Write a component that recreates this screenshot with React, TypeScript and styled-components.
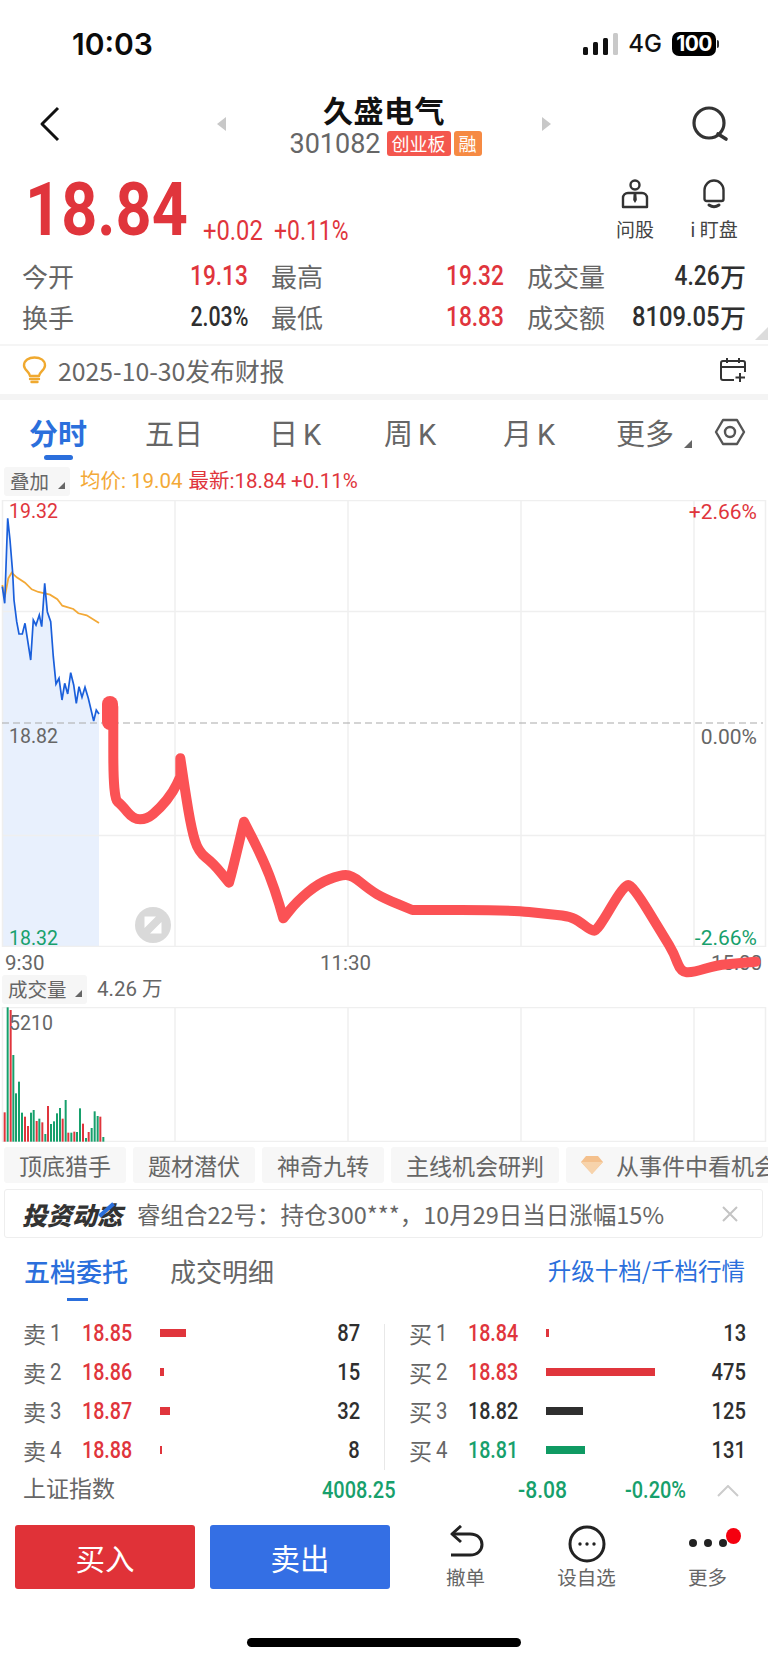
import React from "react";
import styled, { createGlobalStyle } from "styled-components";

const CJK = `"Noto Sans CJK SC", "Liberation Sans", sans-serif`;
const DIGITS = `Roboto, "Noto Sans CJK SC", sans-serif`;
const RED = "#e0353c";
const GREEN = "#17a06c";
const BLUE = "#2b6fdc";
const GREY = "#666666";
const DARK = "#2f2f2f";

const Global = createGlobalStyle`
  html, body { margin: 0; padding: 0; background: #fff; }
  body { width: 768px; height: 1662px; overflow: hidden; font-family: ${CJK}; }
  * { box-sizing: border-box; }
`;

const Page = styled.div`
  width: 768px;
  height: 1662px;
  overflow: hidden;
  background: #fff;
  display: flex;
  flex-direction: column;
`;

// the app's numerals are a condensed DIN; no such font here, so squeeze Roboto
const Num = styled.span<{ $s?: number; $from?: "left" | "right" }>`
  display: inline-block;
  font-family: ${DIGITS};
  white-space: nowrap;
  transform: scaleX(${({ $s }) => $s ?? 0.84});
  transform-origin: ${({ $from }) => $from ?? "left"} center;
`;

/* status bar */
const StatusBar = styled.div`
  height: 88px;
  display: flex;
  align-items: flex-start;
  justify-content: space-between;
  padding: 27px 52px 0 72px;
`;
const Clock = styled.span`
  font: 600 30px/34px Inter, "Liberation Sans", sans-serif;
  color: #0b0b0b;
`;
const StatusRight = styled.div`
  display: flex;
  align-items: center;
  height: 34px;
`;
const Net = styled.span`
  font: 500 24px/34px Inter, "Liberation Sans", sans-serif;
  color: #111;
  margin: 0 10px;
`;
const Battery = styled.span`
  width: 44px;
  height: 24px;
  border-radius: 7px;
  background: #000;
  color: #fff;
  font: 700 21px/24px Inter, "Liberation Sans", sans-serif;
  letter-spacing: -0.6px;
  text-align: center;
  position: relative;
  &::after {
    content: "";
    position: absolute;
    right: -3px;
    top: 8px;
    width: 2px;
    height: 8px;
    border-radius: 0 2px 2px 0;
    background: #333;
  }
`;

/* header */
const Header = styled.div`
  height: 77px;
  display: grid;
  grid-template-columns: 217px 334px 1fr;
  align-items: center;
  padding-right: 39px;
`;
const Back = styled.svg`
  margin: 0 0 6px 39px;
`;
const TitleWrap = styled.div`
  display: flex;
  align-items: center;
  justify-content: space-between;
  margin-bottom: 6px;
`;
const TitleBlock = styled.div`
  display: flex;
  flex-direction: column;
  align-items: center;
`;
const Title = styled.div`
  font: 600 30px/38px ${CJK};
  color: #111;
  letter-spacing: 0.5px;
`;
const CodeRow = styled.div`
  display: flex;
  align-items: center;
  gap: 6px;
  height: 28px;
  margin-top: 2px;
`;
const Code = styled.span`
  font: 400 27px/28px Roboto, sans-serif;
  color: ${GREY};
`;
const Badge = styled.span<{ $bg: string }>`
  height: 25px;
  padding: 0 5px;
  margin-right: -3px;
  border-radius: 3px;
  background: ${({ $bg }) => $bg};
  color: #fff;
  font: 400 18px/24px ${CJK};
`;
const Arrow = styled.span<{ $dir: "left" | "right" }>`
  width: 0;
  height: 0;
  border-top: 7px solid transparent;
  border-bottom: 7px solid transparent;
  ${({ $dir }) =>
    $dir === "left" ? "border-right: 9px solid #c8c8c8;" : "border-left: 9px solid #c8c8c8;"}
`;
const SearchIcon = styled.svg`
  justify-self: end;
  margin-bottom: 6px;
`;

/* quote */
const Quote = styled.div`
  height: 179px;
  padding: 0 22px 0 22px;
  position: relative;
`;
const PriceRow = styled.div`
  height: 93px;
  display: flex;
  align-items: flex-start;
`;
const Price = styled.div`
  width: 178px;
  margin-left: 3px;
  font: 700 75px/88px ${DIGITS};
  color: ${RED};
`;
const Change = styled.div<{ $w: number }>`
  width: ${({ $w }) => $w}px;
  margin-top: 50px;
  font: 400 27px/32px ${DIGITS};
  color: ${RED};
`;
const QuoteTools = styled.div`
  margin-left: auto;
  display: flex;
  gap: 33px;
  margin-right: 9px;
  margin-top: 14px;
`;
const QuoteTool = styled.div`
  width: 46px;
  display: flex;
  flex-direction: column;
  align-items: center;
  gap: 9px;
  font: 400 19px/22px ${CJK};
  color: #444;
  white-space: nowrap;
`;
const Stats = styled.div`
  display: grid;
  grid-template-columns: 226px 233px 219px;
  column-gap: 23px;
  row-gap: 5px;
`;
const Stat = styled.div`
  display: flex;
  justify-content: space-between;
  align-items: center;
  height: 36px;
`;
const StatLabel = styled.span`
  font: 400 26px/36px ${CJK};
  color: ${GREY};
`;
const StatValue = styled.span<{ $c?: string }>`
  display: flex;
  align-items: center;
  font: 500 27px/36px ${DIGITS};
  color: ${({ $c }) => $c || DARK};
  b {
    font: 500 26px/36px ${CJK};
  }
`;
const Corner = styled.span`
  position: absolute;
  right: 0;
  bottom: 4px;
  width: 0;
  height: 0;
  border-left: 13px solid transparent;
  border-bottom: 13px solid #dcdcdc;
`;

/* alert */
const Alert = styled.div`
  height: 56px;
  border-top: 2px solid #f5f5f5;
  border-bottom: 6px solid #f4f4f4;
  display: flex;
  align-items: center;
  padding: 0 22px;
  gap: 11px;
`;
const AlertText = styled.span`
  flex: 1;
  font: 400 24.8px/34px ${CJK};
  color: ${GREY};
  white-space: nowrap;
`;

/* period tabs */
const Periods = styled.div`
  height: 62px;
  display: grid;
  grid-template-columns: 116px 116px 126px 104px 134px 98px 1fr;
  align-items: start;
  padding-top: 12px;
`;
const Period = styled.div<{ $on?: boolean }>`
  position: relative;
  text-align: center;
  font: ${({ $on }) => ($on ? 600 : 400)} 29px/40px ${CJK};
  color: ${({ $on }) => ($on ? BLUE : GREY)};
  white-space: nowrap;
  ${({ $on }) =>
    $on &&
    `&::after {
      content: "";
      position: absolute;
      left: 44px;
      top: 43px;
      width: 29px;
      height: 5px;
      border-radius: 3px;
      background: ${BLUE};
    }`}
  i {
    position: absolute;
    right: 2px;
    top: 28px;
    width: 0;
    height: 0;
    border-left: 8px solid transparent;
    border-bottom: 8px solid #666;
  }
  u {
    text-decoration: none;
    margin-left: 5px;
    font-family: Roboto, sans-serif;
  }
`;
const Hex = styled.svg`
  margin: 6px 0 0 20px;
`;

/* legends */
const Legend = styled.div<{ $h: number; $top: number; $left: number }>`
  height: ${({ $h }) => $h}px;
  display: flex;
  align-items: flex-start;
  padding-top: ${({ $top }) => $top}px;
  padding-left: ${({ $left }) => $left}px;
  gap: 10px;
`;
const Picker = styled.div<{ $w: number }>`
  width: ${({ $w }) => $w}px;
  height: 29px;
  border-radius: 3px;
  background: #f6f6f6;
  position: relative;
  padding-left: 6px;
  font: 400 19.5px/28px ${CJK};
  color: ${GREY};
  white-space: nowrap;
  &::after {
    content: "";
    position: absolute;
    right: 5px;
    bottom: 7px;
    border-left: 7px solid transparent;
    border-bottom: 7px solid #666;
  }
`;
const LegendText = styled.span<{ $c: string }>`
  font: 400 20.5px/28px Roboto, ${CJK};
  color: ${({ $c }) => $c};
  white-space: nowrap;
  & + & {
    margin-left: -4px;
  }
`;

/* minute chart */
const ChartBox = styled.div`
  position: relative;
  height: 447px;
`;
const FullSvg = styled.svg`
  display: block;
`;
const Scribble = styled.svg`
  position: absolute;
  left: 0;
  top: 0;
  z-index: 2;
  pointer-events: none;
`;
const AxisLabel = styled.span<{ $top: number; $right?: boolean; $c: string }>`
  position: absolute;
  top: ${({ $top }) => $top}px;
  ${({ $right }) => ($right ? "right: 11px;" : "left: 9px;")}
  font: 400 ${({ $right }) => ($right ? 21 : 19.5)}px/22px Roboto, sans-serif;
  color: ${({ $c }) => $c};
`;
const ExpandBtn = styled.svg`
  position: absolute;
  left: 134px;
  top: 406px;
`;
const TimeAxis = styled.div`
  height: 28px;
  display: grid;
  grid-template-columns: 315px 1fr auto;
  padding: 4px 6px 0 5px;
  font: 400 20.5px/24px Roboto, sans-serif;
  color: ${GREY};
`;
const VolumeBox = styled.div`
  height: 135px;
  position: relative;
`;

/* quick chips */
const Chips = styled.div`
  height: 47px;
  padding: 5px 0 0 4px;
  display: flex;
  gap: 7px;
  overflow: hidden;
`;
const Chip = styled.div`
  flex: none;
  height: 36px;
  padding: 0 15px;
  display: flex;
  align-items: center;
  gap: 13px;
  background: #f7f7f7;
  border-radius: 3px;
  font: 400 23px/36px ${CJK};
  color: ${GREY};
  white-space: nowrap;
`;

/* notice */
const Notice = styled.div`
  height: 49px;
  margin: 0 5px 0 4px;
  border: 1px solid #eeeeee;
  border-radius: 3px;
  display: flex;
  align-items: center;
  padding: 0 24px 0 17px;
`;
const NoticeTitle = styled.span`
  position: relative;
  font: italic 900 25px/32px ${CJK};
  color: #333;
  margin-right: 15px;
  white-space: nowrap;
  &::after {
    content: "";
    position: absolute;
    left: 75px;
    top: 10px;
    width: 19px;
    height: 4px;
    background: ${BLUE};
    transform: rotate(-42deg);
  }
`;
const NoticeText = styled.span`
  flex: 1;
  font: 400 23.5px/32px ${CJK};
  color: ${GREY};
  white-space: nowrap;
`;

/* order book */
const BookTabs = styled.div`
  height: 75px;
  display: flex;
  align-items: flex-start;
  padding: 14px 23px 0 24px;
`;
const BookTab = styled.div<{ $on?: boolean }>`
  position: relative;
  font: ${({ $on }) => ($on ? 500 : 400)} 26px/38px ${CJK};
  color: ${({ $on }) => ($on ? BLUE : GREY)};
  margin-right: 42px;
  ${({ $on }) =>
    $on &&
    `&::after {
      content: "";
      position: absolute;
      left: 43px;
      top: 46px;
      width: 21px;
      height: 3px;
      background: ${BLUE};
    }`}
`;
const Upgrade = styled.div`
  margin-left: auto;
  font: 400 23.5px/36px ${CJK};
  color: ${BLUE};
  white-space: nowrap;
`;
const Book = styled.div`
  height: 157px;
  display: grid;
  grid-template-columns: 361px 362px;
  padding-left: 23px;
  position: relative;
  &::before {
    content: "";
    position: absolute;
    left: 384px;
    top: 11px;
    bottom: 0;
    width: 1px;
    background: #e8e8e8;
  }
`;
const BookSide = styled.div<{ $right?: boolean }>`
  display: flex;
  flex-direction: column;
  padding: ${({ $right }) => ($right ? "0 0 0 25px" : "0 24px 0 0")};
`;
const Level = styled.div`
  height: 39px;
  display: flex;
  align-items: center;
`;
const LevelName = styled.span`
  width: 59px;
  font: 400 23px/30px ${CJK};
  color: ${GREY};
  white-space: nowrap;
  display: flex;
  align-items: center;
`;
const LevelDigit = styled(Num)`
  font-size: 24px;
  margin-left: 4px;
`;
const LevelPrice = styled.span<{ $c: string }>`
  width: 78px;
  font: 500 24px/30px ${DIGITS};
  color: ${({ $c }) => $c};
`;
const Track = styled.div`
  flex: 1;
`;
const Bar = styled.div<{ $c: string }>`
  height: 8px;
  background: ${({ $c }) => $c};
`;
const Qty = styled.span`
  font: 500 24px/30px ${DIGITS};
  color: ${DARK};
`;

/* index strip */
const IndexRow = styled.div`
  height: 40px;
  margin-bottom: 15px;
  display: grid;
  grid-template-columns: 299px 196px 107px 92px 1fr;
  padding: 0 30px 0 23px;
  align-items: center;
`;
const IndexName = styled.span`
  font: 400 23px/34px ${CJK};
  color: ${GREY};
  margin-bottom: 8px;
`;
const IndexNum = styled.span`
  font: 500 24px/34px ${DIGITS};
  color: ${GREEN};
  margin-bottom: 2px;
`;
const IndexChevron = styled.svg`
  justify-self: end;
`;

/* bottom actions */
const Actions = styled.div`
  height: 64px;
  display: flex;
  padding-left: 15px;
`;
const Trade = styled.div<{ $bg: string }>`
  width: 180px;
  height: 64px;
  margin-right: 15px;
  border-radius: 3px;
  background: ${({ $bg }) => $bg};
  color: #fff;
  text-align: center;
  font: 400 29.5px/64px ${CJK};
`;
const Tool = styled.div`
  width: 121px;
  position: relative;
  display: flex;
  flex-direction: column;
  align-items: center;
  justify-content: space-between;
  font: 400 19.5px/24px ${CJK};
  color: ${GREY};
`;
const RedDot = styled.span`
  position: absolute;
  left: 79px;
  top: 3px;
  width: 15px;
  height: 16px;
  border-radius: 50%;
  background: #f5000f;
`;
const HomeBar = styled.div`
  width: 274px;
  height: 9px;
  border-radius: 5px;
  background: #000;
  margin: 49px auto 0;
`;

/* data, traced from the picture: zoom coordinates mapped back to page pixels */
type P = [number, number];
const fromLeft = (pts: P[]): P[] => pts.map(([x, y]) => [x / 3, y / 3 + 490]);
const fromRight = (pts: P[]): P[] => pts.map(([x, y]) => [x / 3 + 384, y / 3 + 700]);
const toPath = (pts: P[]) => pts.map(([x, y], i) => `${i ? "L" : "M"}${x.toFixed(1)} ${y.toFixed(1)}`).join(" ");
// hand-drawn stroke: curve through midpoints, a repeated point keeps a sharp tip
const toCurve = (pts: P[]) => {
  let d = `M${pts[0][0].toFixed(1)} ${pts[0][1].toFixed(1)}`;
  for (let i = 1; i < pts.length - 1; i++) {
    const mx = (pts[i][0] + pts[i + 1][0]) / 2;
    const my = (pts[i][1] + pts[i + 1][1]) / 2;
    d += ` Q${pts[i][0].toFixed(1)} ${pts[i][1].toFixed(1)} ${mx.toFixed(1)} ${my.toFixed(1)}`;
  }
  const last = pts[pts.length - 1];
  return `${d} L${last[0].toFixed(1)} ${last[1].toFixed(1)}`;
};

const minutePts = fromLeft([
  [7, 290], [14, 340], [23, 85], [30, 150], [38, 250], [42, 330], [50, 395], [57, 432], [67, 432],
  [75, 400], [92, 510], [100, 390], [108, 405], [118, 375], [125, 410], [134, 280], [142, 365],
  [152, 395], [160, 500], [168, 582], [177, 565], [186, 630], [194, 580], [203, 612], [212, 548],
  [221, 585], [229, 640], [237, 590], [246, 622], [255, 592], [265, 625], [281, 693], [289, 660], [297, 672],
]);
const averagePts = fromLeft([
  [7, 285], [14, 322], [25, 265], [35, 248], [50, 262], [75, 278], [95, 298], [115, 306], [150, 314],
  [172, 328], [187, 347], [220, 357], [235, 370], [260, 376], [297, 399],
]);
const scribblePts: P[] = [
  ...fromLeft([
    [340, 650], [340, 650], [340, 925], [365, 945], [400, 988], [440, 988], [480, 955], [520, 905], [541, 860],
    [541, 860], [541, 805], [541, 805], [555, 900], [575, 1020], [595, 1085], [640, 1120], [687, 1178], [687, 1178],
    [700, 1130], [732, 995], [732, 995], [790, 1110], [825, 1200], [850, 1285], [850, 1285], [890, 1235], [955, 1180],
    [1020, 1155], [1055, 1155], [1110, 1200], [1152, 1225],
  ]),
  ...fromRight([
    [85, 630], [85, 630], [380, 630], [490, 642], [550, 648], [580, 660], [622, 692], [640, 692], [720, 555], [745, 555],
    [840, 710], [870, 760], [890, 815], [925, 818], [1000, 795], [1060, 790], [1115, 785],
  ]),
];
const volumes: [number, number, "r" | "g"][] = [
  [14, 457, "r"], [23, 142, "g"], [32, 150, "r"], [40, 285, "g"], [48, 400, "g"], [57, 365, "g"],
  [66, 458, "g"], [75, 470, "r"], [84, 498, "r"], [93, 458, "g"], [101, 450, "g"], [110, 483, "r"],
  [118, 476, "g"], [127, 487, "r"], [136, 522, "g"], [144, 438, "r"], [153, 492, "g"], [162, 484, "g"],
  [171, 460, "g"], [180, 444, "g"], [188, 476, "r"], [197, 420, "g"], [205, 518, "r"], [214, 518, "g"],
  [223, 515, "r"], [231, 516, "g"], [240, 445, "g"], [249, 491, "r"], [258, 534, "g"], [266, 516, "r"],
  [275, 504, "g"], [284, 454, "g"], [293, 468, "g"], [301, 470, "r"], [310, 531, "g"],
];
const asks = [
  { name: "卖", n: 1, price: "18.85", c: RED, w: 26, bar: RED, qty: 87 },
  { name: "卖", n: 2, price: "18.86", c: RED, w: 4, bar: RED, qty: 15 },
  { name: "卖", n: 3, price: "18.87", c: RED, w: 10, bar: RED, qty: 32 },
  { name: "卖", n: 4, price: "18.88", c: RED, w: 2, bar: RED, qty: 8 },
];
const bids = [
  { name: "买", n: 1, price: "18.84", c: RED, w: 3, bar: RED, qty: 13 },
  { name: "买", n: 2, price: "18.83", c: RED, w: 109, bar: RED, qty: 475 },
  { name: "买", n: 3, price: "18.82", c: DARK, w: 37, bar: "#2f2f2f", qty: 125 },
  { name: "买", n: 4, price: "18.81", c: GREEN, w: 39, bar: "#0f9a63", qty: 131 },
];
const GRID_X = [175, 348, 521, 694];
const GRID = "#efefef";

function BookLevels({ rows }: { rows: typeof asks }) {
  return (
    <>
      {rows.map((r) => (
        <Level key={r.n}>
          <LevelName>
            {r.name}
            <LevelDigit $s={0.85}>{r.n}</LevelDigit>
          </LevelName>
          <LevelPrice $c={r.c}>
            <Num $s={0.82}>{r.price}</Num>
          </LevelPrice>
          <Track>
            <Bar $c={r.bar} style={{ width: r.w }} />
          </Track>
          <Qty>
            <Num $s={0.84} $from="right">
              {r.qty}
            </Num>
          </Qty>
        </Level>
      ))}
    </>
  );
}

export default function App() {
  return (
    <Page>
      <Global />
      <StatusBar>
        <Clock>10:03</Clock>
        <StatusRight>
          <svg width="35" height="22" viewBox="0 0 35 22">
            <rect x="0" y="14" width="5" height="8" rx="1.5" fill="#111" />
            <rect x="10" y="9" width="5" height="13" rx="1.5" fill="#111" />
            <rect x="20" y="5" width="5" height="17" rx="1.5" fill="#111" />
            <rect x="30" y="0" width="5" height="22" rx="1.5" fill="#c9c9c9" />
          </svg>
          <Net>4G</Net>
          <Battery>100</Battery>
        </StatusRight>
      </StatusBar>

      <Header>
        <Back width="22" height="36" viewBox="0 0 22 36" fill="none">
          <path d="M19 2 L3 18 L19 34" stroke="#111" strokeWidth="3" strokeLinejoin="round" />
        </Back>
        <TitleWrap>
          <Arrow $dir="left" />
          <TitleBlock>
            <Title>久盛电气</Title>
            <CodeRow>
              <Code>301082</Code>
              <Badge $bg="#f4574e">创业板</Badge>
              <Badge $bg="#f68a43">融</Badge>
            </CodeRow>
          </TitleBlock>
          <Arrow $dir="right" />
        </TitleWrap>
        <SearchIcon width="38" height="36" viewBox="0 0 38 36" fill="none">
          <circle cx="18" cy="17" r="15" stroke="#333" strokeWidth="3.2" />
          <path d="M27 28 L35 33" stroke="#333" strokeWidth="3.6" strokeLinecap="round" />
        </SearchIcon>
      </Header>

      <Quote>
        <PriceRow>
          <Price>
            <Num $s={0.84}>18.84</Num>
          </Price>
          <Change $w={71}>
            <Num $s={0.88}>+0.02</Num>
          </Change>
          <Change $w={90}>
            <Num $s={0.85}>+0.11%</Num>
          </Change>
          <QuoteTools>
            <QuoteTool>
              <svg width="30" height="30" viewBox="0 0 30 30" fill="none" stroke="#333" strokeWidth="2.4">
                <circle cx="15" cy="6" r="4.5" />
                <path d="M3 28 V19 a5 5 0 0 1 5 -5 H22 a5 5 0 0 1 5 5 V28 Z" strokeLinejoin="round" />
                <path d="M13.6 15 H16.4 L16.8 21 L15 24 L13.2 21 Z" fill="#333" stroke="none" />
              </svg>
              问股
            </QuoteTool>
            <QuoteTool>
              <svg width="26" height="30" viewBox="0 0 26 30" fill="none" stroke="#333" strokeWidth="2.4">
                <path d="M3.5 20 V11 a9.5 9.5 0 0 1 19 0 V20 a2 2 0 0 1 -2 2 H5.5 a2 2 0 0 1 -2 -2 Z" strokeLinejoin="round" />
                <path d="M8 26 Q13 29.5 18 26" strokeWidth="3" strokeLinecap="round" />
              </svg>
              i 盯盘
            </QuoteTool>
          </QuoteTools>
        </PriceRow>
        <Stats>
          <Stat>
            <StatLabel>今开</StatLabel>
            <StatValue $c={RED}>
              <Num $from="right">19.13</Num>
            </StatValue>
          </Stat>
          <Stat>
            <StatLabel>最高</StatLabel>
            <StatValue $c={RED}>
              <Num $from="right">19.32</Num>
            </StatValue>
          </Stat>
          <Stat>
            <StatLabel>成交量</StatLabel>
            <StatValue>
              <Num $from="right">4.26</Num>
              <b>万</b>
            </StatValue>
          </Stat>
          <Stat>
            <StatLabel>换手</StatLabel>
            <StatValue>
              <Num $s={0.79} $from="right">2.03%</Num>
            </StatValue>
          </Stat>
          <Stat>
            <StatLabel>最低</StatLabel>
            <StatValue $c={RED}>
              <Num $from="right">18.83</Num>
            </StatValue>
          </Stat>
          <Stat>
            <StatLabel>成交额</StatLabel>
            <StatValue>
              <Num $s={0.88} $from="right">8109.05</Num>
              <b>万</b>
            </StatValue>
          </Stat>
        </Stats>
        <Corner />
      </Quote>

      <Alert>
        <svg width="25" height="28" viewBox="0 0 25 28" fill="none" stroke="#f0a92f" strokeWidth="2.4">
          <path d="M8 20 C8 16 2 14 2 9.5 C2 4 7 1.5 12.5 1.5 C18 1.5 23 4 23 9.5 C23 14 17 16 17 20 Z" strokeLinejoin="round" />
          <path d="M8 23 H17 M9.5 26 H15.5" strokeLinecap="round" />
        </svg>
        <AlertText>2025-10-30发布财报</AlertText>
        <svg width="26" height="26" viewBox="0 0 26 26" fill="none" stroke="#333" strokeWidth="2">
          <path d="M14 23 H3 a2 2 0 0 1 -2 -2 V6 a2 2 0 0 1 2 -2 H23 a2 2 0 0 1 2 2 V15" />
          <path d="M1 10 H25 M7 1 V6 M19 1 V6 M20 16 V25 M15.5 20.5 H25" />
        </svg>
      </Alert>

      <Periods>
        <Period $on>分时</Period>
        <Period>五日</Period>
        <Period>
          日<u>K</u>
        </Period>
        <Period>
          周<u>K</u>
        </Period>
        <Period>
          月<u>K</u>
        </Period>
        <Period>
          更多
          <i />
        </Period>
        <Hex width="32" height="28" viewBox="0 0 32 28" fill="none" stroke="#555" strokeWidth="2.4">
          <path d="M9 2 H23 L30 14 L23 26 H9 L2 14 Z" strokeLinejoin="round" />
          <circle cx="16" cy="14" r="5" />
        </Hex>
      </Periods>

      <Legend $h={38} $top={5} $left={4}>
        <Picker $w={66}>叠加</Picker>
        <LegendText $c="#f3a937">均价: 19.04</LegendText>
        <LegendText $c={RED}>最新:18.84 +0.11%</LegendText>
      </Legend>

      <ChartBox>
        <FullSvg width="768" height="447" viewBox="0 500 768 447" fill="none">
          <path d={`${toPath(minutePts)} L99 947 L2 947 Z`} fill="#e8f0fd" />
          <rect x="2.5" y="500.5" width="763" height="446" stroke={GRID} strokeWidth="1.5" />
          <path d="M2 611.5 H766 M2 835.5 H766" stroke={GRID} strokeWidth="1.5" />
          {GRID_X.map((x) => (
            <path key={x} d={`M${x} 500 V947`} stroke={GRID} strokeWidth="1.5" />
          ))}
          <path d="M2 723 H763" stroke="#aaaaaa" strokeWidth="1.2" strokeDasharray="7 4" />
          <path d={toPath(averagePts)} stroke="#f3a937" strokeWidth="1.8" />
          <path d={toPath(minutePts)} stroke="#1a5fdb" strokeWidth="1.7" />
        </FullSvg>
        <AxisLabel $top={1} $c={RED}>19.32</AxisLabel>
        <AxisLabel $top={1} $right $c={RED}>+2.66%</AxisLabel>
        <AxisLabel $top={226} $c={GREY}>18.82</AxisLabel>
        <AxisLabel $top={226} $right $c={GREY}>0.00%</AxisLabel>
        <AxisLabel $top={428} $c={GREEN}>18.32</AxisLabel>
        <AxisLabel $top={427} $right $c={GREEN}>-2.66%</AxisLabel>
        <ExpandBtn width="38" height="38" viewBox="0 0 38 38">
          <circle cx="19" cy="19" r="18" fill="#d9d9d9" />
          <path d="M10.5 10.5 H22 L10.5 22 Z M27.5 27.5 H16 L27.5 16 Z" fill="#fff" />
        </ExpandBtn>
        <Scribble width="768" height="480" viewBox="0 500 768 480" fill="none">
          <path d="M110 704 V722" stroke="#fb5255" strokeWidth="16" strokeLinecap="round" />
          <path d={toCurve(scribblePts)} stroke="#fb5255" strokeWidth="10" strokeLinecap="round" strokeLinejoin="round" />
        </Scribble>
      </ChartBox>

      <TimeAxis>
        <span>9:30</span>
        <span>11:30</span>
        <span>15:00</span>
      </TimeAxis>

      <Legend $h={32} $top={0} $left={2}>
        <Picker $w={85}>成交量</Picker>
        <LegendText $c={GREY}>4.26 万</LegendText>
      </Legend>

      <VolumeBox>
        <FullSvg width="768" height="135" viewBox="0 1007 768 135" fill="none">
          <rect x="2.5" y="1007.5" width="763" height="134" stroke={GRID} strokeWidth="1.5" />
          {GRID_X.map((x) => (
            <path key={x} d={`M${x} 1007 V1142`} stroke={GRID} strokeWidth="1.5" />
          ))}
          {volumes.map(([x, top, side]) => (
            <rect
              key={x}
              x={x / 3 - 1}
              y={top / 3 + 960}
              width="2"
              height={(545 - top) / 3}
              fill={side === "r" ? RED : GREEN}
            />
          ))}
        </FullSvg>
        <AxisLabel $top={6} $c={GREY}>5210</AxisLabel>
      </VolumeBox>

      <Chips>
        <Chip>顶底猎手</Chip>
        <Chip>题材潜伏</Chip>
        <Chip>神奇九转</Chip>
        <Chip>主线机会研判</Chip>
        <Chip>
          <svg width="22" height="18" viewBox="0 0 22 18">
            <path d="M5 0 H17 L22 6 L11 18 L0 6 Z" fill="#f4c08c" />
            <path d="M0 6 H22 L11 18 Z" fill="#f7d3ab" />
          </svg>
          从事件中看机会
        </Chip>
      </Chips>

      <Notice>
        <NoticeTitle>投资动态</NoticeTitle>
        <NoticeText>睿组合22号：持仓300***，10月29日当日涨幅15%</NoticeText>
        <svg width="16" height="16" viewBox="0 0 16 16" stroke="#c4c4c4" strokeWidth="2">
          <path d="M1 1 L15 15 M15 1 L1 15" />
        </svg>
      </Notice>

      <BookTabs>
        <BookTab $on>五档委托</BookTab>
        <BookTab>成交明细</BookTab>
        <Upgrade>升级十档/千档行情</Upgrade>
      </BookTabs>

      <Book>
        <BookSide>
          <BookLevels rows={asks} />
        </BookSide>
        <BookSide $right>
          <BookLevels rows={bids} />
        </BookSide>
      </Book>

      <IndexRow>
        <IndexName>上证指数</IndexName>
        <IndexNum>
          <Num $s={0.83}>4008.25</Num>
        </IndexNum>
        <IndexNum>
          <Num $s={0.88}>-8.08</Num>
        </IndexNum>
        <IndexNum>
          <Num $s={0.83}>-0.20%</Num>
        </IndexNum>
        <IndexChevron width="22" height="12" viewBox="0 0 22 12" fill="none">
          <path d="M1 11 L11 1 L21 11" stroke="#cccccc" strokeWidth="2" />
        </IndexChevron>
      </IndexRow>

      <Actions>
        <Trade $bg="#e03238">买入</Trade>
        <Trade $bg="#346fe4">卖出</Trade>
        <Tool>
          <svg width="36" height="36" viewBox="0 0 36 36" fill="none" stroke="#222" strokeWidth="3">
            <path d="M3 30 H22 C38 30 38 9 22 9 H4" />
            <path d="M13 1 L4 9 L13 17" strokeLinejoin="round" />
          </svg>
          撤单
        </Tool>
        <Tool>
          <svg width="38" height="38" viewBox="0 0 38 38" fill="none" stroke="#222" strokeWidth="3">
            <ellipse cx="19" cy="19" rx="17" ry="17" />
            <circle cx="12" cy="19" r="1.7" fill="#222" stroke="none" />
            <circle cx="19" cy="19" r="1.7" fill="#222" stroke="none" />
            <circle cx="26" cy="19" r="1.7" fill="#222" stroke="none" />
          </svg>
          设自选
        </Tool>
        <Tool>
          <svg width="38" height="36" viewBox="0 0 38 36" fill="#222">
            <circle cx="4" cy="18" r="4" />
            <circle cx="19" cy="18" r="4" />
            <circle cx="34" cy="18" r="4" />
          </svg>
          更多
          <RedDot />
        </Tool>
      </Actions>

      <HomeBar />
    </Page>
  );
}
